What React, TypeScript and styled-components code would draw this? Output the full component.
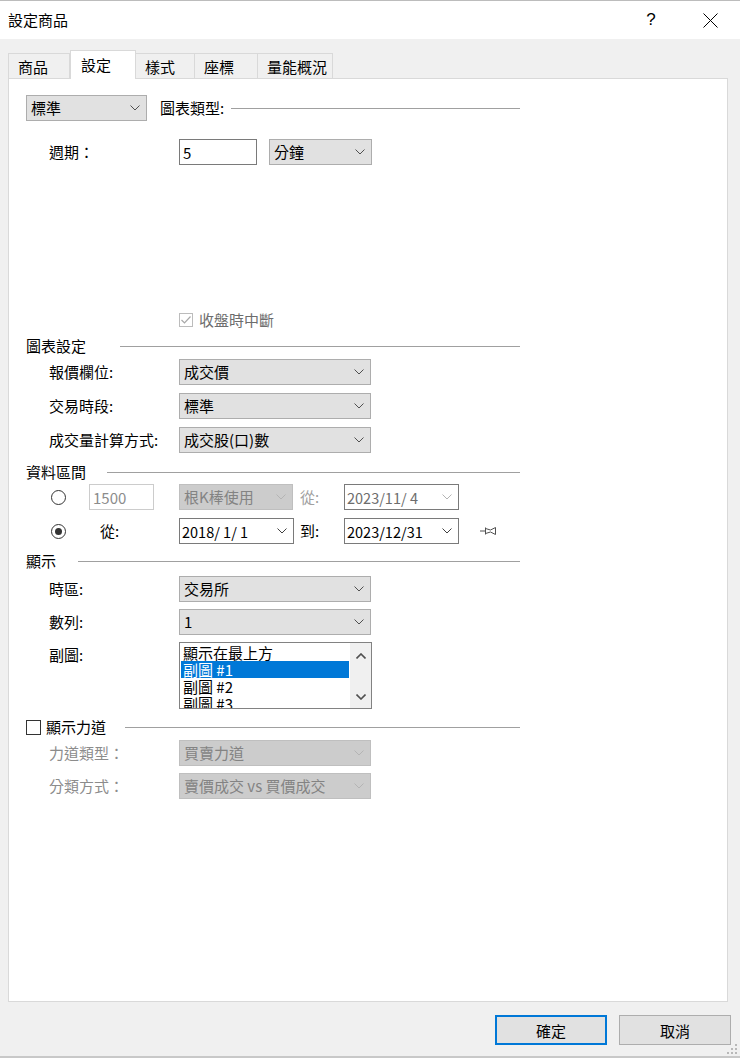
import styled, { createGlobalStyle } from "styled-components";

const GlobalStyle = createGlobalStyle`
  html, body {
    margin: 0;
    padding: 0;
    background: #f0f0f0;
  }
  body {
    font-family: "Noto Sans CJK TC", "Noto Sans", sans-serif;
    font-size: 15px;
    color: #000;
  }
`;

const TABS = [
  { label: "商品", w: 62 },
  { label: "設定", w: 66 },
  { label: "樣式", w: 59 },
  { label: "座標", w: 63 },
  { label: "量能概況", w: 75 },
];
const ACTIVE_TAB = 1;

const SUB_CHARTS = ["顯示在最上方", "副圖 #1", "副圖 #2", "副圖 #3"];

const Chevron = ({ color = "#505050" }) => (
  <svg width="10" height="6" viewBox="0 0 10 6">
    <polyline points="0.5,0.5 5,5 9.5,0.5" fill="none" stroke={color} strokeWidth="1" />
  </svg>
);

const ComboBox = ({ w, value, disabled = false }) => (
  <Combo $w={w} $disabled={disabled}>
    <span>{value}</span>
    <Chevron color={disabled ? "#b4b4b4" : "#505050"} />
  </Combo>
);

const DatePicker = ({ value, disabled = false }) => (
  <DateBox $disabled={disabled}>
    <DateText>{value}</DateText>
    <Chevron color={disabled ? "#b4b4b4" : "#404040"} />
  </DateBox>
);

const PinIcon = () => (
  <svg width="18" height="10" viewBox="0 0 18 10">
    <path
      d="M0 5H5 M5.5 1.5V8.5 M5.5 2.5L10.5 4L15.5 1.5V8.5L10.5 6L5.5 7.5"
      fill="none"
      stroke="#505050"
      strokeWidth="1"
    />
  </svg>
);

const App = () => {
  return (
    <>
      <GlobalStyle />
      <Window>
        <TitleBar>
          <Title>設定商品</Title>
          <HelpButton>?</HelpButton>
          <CloseButton>
            <svg width="15" height="15" viewBox="0 0 15 15">
              <path d="M0.5 0.5L14.5 14.5M14.5 0.5L0.5 14.5" stroke="#000" strokeWidth="1" />
            </svg>
          </CloseButton>
        </TitleBar>

        <TabStrip>
          {TABS.map((t, i) => (
            <Tab key={t.label} $w={t.w} $active={i === ACTIVE_TAB}>
              {t.label}
            </Tab>
          ))}
        </TabStrip>

        <Panel>
          <Content>
            <Row>
              <ComboBox w={121} value="標準" />
              <HeaderLabel $ml={13}>圖表類型:</HeaderLabel>
              <Rule $gap={7} />
            </Row>

            <Row $mt={18} $indent={23}>
              <FieldLabel $w={130}>週期：</FieldLabel>
              <TextBox $w={78}>5</TextBox>
              <Spacer $w={12} />
              <ComboBox w={103} value="分鐘" />
            </Row>

            <CheckRow $mt={145} $indent={153}>
              <CheckBox $disabled>
                <svg width="12" height="12" viewBox="0 0 12 12">
                  <polyline points="1.5,6 4.5,9 10.5,2.5" fill="none" stroke="#a8a8a8" strokeWidth="1.2" />
                </svg>
              </CheckBox>
              <MutedText $dark>收盤時中斷</MutedText>
            </CheckRow>

            <Header $mt={6}>
              <HeaderLabel>圖表設定</HeaderLabel>
              <Rule $gap={34} />
            </Header>
            <RowStack $mt={3} $gap={8}>
              <Row $indent={23}>
                <FieldLabel $w={130}>報價欄位:</FieldLabel>
                <ComboBox w={192} value="成交價" />
              </Row>
              <Row $indent={23}>
                <FieldLabel $w={130}>交易時段:</FieldLabel>
                <ComboBox w={192} value="標準" />
              </Row>
              <Row $indent={23}>
                <FieldLabel $w={130}>成交量計算方式:</FieldLabel>
                <ComboBox w={192} value="成交股(口)數" />
              </Row>
            </RowStack>

            <Header $mt={9}>
              <HeaderLabel>資料區間</HeaderLabel>
              <Rule $gap={21} />
            </Header>
            <RowStack $mt={2} $gap={8}>
              <RangeRow>
                <RadioCell>
                  <Radio />
                </RadioCell>
                <TextBox $w={65} $disabled>
                  1500
                </TextBox>
                <ComboBox w={114} value="根K棒使用" disabled />
                <RangeLabel $muted>從:</RangeLabel>
                <DatePicker value="2023/11/ 4" disabled />
                <span />
              </RangeRow>
              <RangeRow>
                <RadioCell>
                  <Radio $checked />
                </RadioCell>
                <RangeLabel $indent={11}>從:</RangeLabel>
                <DatePicker value="2018/ 1/ 1" />
                <RangeLabel>到:</RangeLabel>
                <DatePicker value="2023/12/31" />
                <PinCell>
                  <PinIcon />
                </PinCell>
              </RangeRow>
            </RowStack>

            <Header $mt={7}>
              <HeaderLabel>顯示</HeaderLabel>
              <Rule $gap={22} />
            </Header>
            <RowStack $mt={5} $gap={7}>
              <Row $indent={23}>
                <FieldLabel $w={130}>時區:</FieldLabel>
                <ComboBox w={192} value="交易所" />
              </Row>
              <Row $indent={23}>
                <FieldLabel $w={130}>數列:</FieldLabel>
                <ComboBox w={192} value="1" />
              </Row>
              <ListRow $indent={23}>
                <FieldLabel $w={130}>副圖:</FieldLabel>
                <ListBox>
                  <ListItems>
                    {SUB_CHARTS.map((s, i) => (
                      <ListItem key={s} $selected={i === 1}>
                        {s}
                      </ListItem>
                    ))}
                  </ListItems>
                  <ScrollBar>
                    <svg width="10" height="6" viewBox="0 0 10 6">
                      <polyline points="0.5,5.5 5,1 9.5,5.5" fill="none" stroke="#505050" strokeWidth="1.6" />
                    </svg>
                    <svg width="10" height="6" viewBox="0 0 10 6">
                      <polyline points="0.5,0.5 5,5 9.5,0.5" fill="none" stroke="#505050" strokeWidth="1.6" />
                    </svg>
                  </ScrollBar>
                </ListBox>
              </ListRow>
            </RowStack>

            <Header $mt={8}>
              <CheckBox $large />
              <HeaderLabel $ml={5}>顯示力道</HeaderLabel>
              <Rule $gap={19} />
            </Header>
            <RowStack $mt={3} $gap={7}>
              <Row $indent={23}>
                <FieldLabel $w={130} $muted>
                  力道類型：
                </FieldLabel>
                <ComboBox w={192} value="買賣力道" disabled />
              </Row>
              <Row $indent={23}>
                <FieldLabel $w={130} $muted>
                  分類方式：
                </FieldLabel>
                <ComboBox w={192} value="賣價成交 vs 買價成交" disabled />
              </Row>
            </RowStack>
          </Content>
        </Panel>

        <Footer>
          <DialogButton $primary>確定</DialogButton>
          <DialogButton>取消</DialogButton>
        </Footer>

        <Grip>
          <svg width="12" height="12" viewBox="0 0 12 12">
            {[
              [10, 2],
              [10, 6],
              [6, 6],
              [10, 10],
              [6, 10],
              [2, 10],
            ].map(([x, y]) => (
              <rect key={`${x}-${y}`} x={x - 1} y={y - 1} width="2" height="2" fill="#b8b8b8" />
            ))}
          </svg>
        </Grip>
      </Window>
    </>
  );
};

export default App;

const Window = styled.div`
  position: relative;
  width: 740px;
  height: 1058px;
  box-sizing: border-box;
  border-top: 1px solid #bcbcbc;
  border-bottom: 2px solid #c8c8c8;
  background: #f0f0f0;
  display: flex;
  flex-direction: column;
`;

const TitleBar = styled.div`
  height: 38px;
  flex-shrink: 0;
  background: #fff;
  display: flex;
  align-items: center;
  padding-left: 8px;
  padding-right: 7px;
`;

const Title = styled.div`
  font-size: 15px;
  line-height: 20px;
`;

const HelpButton = styled.div`
  margin-left: auto;
  width: 46px;
  text-align: center;
  font-family: "Liberation Sans", sans-serif;
  font-size: 17px;
  line-height: 20px;
`;

const CloseButton = styled.div`
  width: 46px;
  margin-left: 13px;
  display: flex;
  justify-content: center;
  align-items: center;
`;

const TabStrip = styled.div`
  margin-top: 11px;
  height: 29px;
  margin-bottom: -1px;
  padding-left: 8px;
  display: flex;
  align-items: flex-end;
  position: relative;
  z-index: 1;
`;

const Tab = styled.div<{ $w: number; $active?: boolean }>`
  width: ${(p) => p.$w}px;
  height: ${(p) => (p.$active ? 29 : 26)}px;
  flex-shrink: 0;
  box-sizing: border-box;
  border: 1px solid #d9d9d9;
  border-left: ${(p) => (p.$active ? "1px solid #d9d9d9" : "none")};
  border-bottom: ${(p) => (p.$active ? "none" : "1px solid #d9d9d9")};
  background: ${(p) => (p.$active ? "#fff" : "#f0f0f0")};
  display: flex;
  align-items: center;
  padding-left: ${(p) => (p.$active ? 10 : 9)}px;
  padding-bottom: ${(p) => (p.$active ? 2 : 0)}px;
  font-size: 15px;

  &:first-child {
    border-left: 1px solid #d9d9d9;
  }
`;

const Panel = styled.div`
  margin-left: 8px;
  width: 720px;
  height: 924px;
  flex-shrink: 0;
  box-sizing: border-box;
  border: 1px solid #d9d9d9;
  background: #fff;
  padding: 16px 0 0 17px;
`;

const Content = styled.div`
  width: 494px;
  display: flex;
  flex-direction: column;
`;

const Row = styled.div<{ $mt?: number; $indent?: number }>`
  display: flex;
  align-items: center;
  height: 26px;
  margin-top: ${(p) => p.$mt ?? 0}px;
  padding-left: ${(p) => p.$indent ?? 0}px;
`;

const CheckRow = styled(Row)`
  height: 20px;
`;

const ListRow = styled(Row)`
  height: 67px;
  align-items: flex-start;

  & > span {
    margin-top: 3px;
  }
`;

const RowStack = styled.div<{ $mt: number; $gap: number }>`
  display: flex;
  flex-direction: column;
  gap: ${(p) => p.$gap}px;
  margin-top: ${(p) => p.$mt}px;
`;

const Header = styled.div<{ $mt: number }>`
  display: flex;
  align-items: center;
  height: 20px;
  margin-top: ${(p) => p.$mt}px;
`;

const HeaderLabel = styled.span<{ $ml?: number }>`
  margin-left: ${(p) => p.$ml ?? 0}px;
  font-size: 15px;
  line-height: 20px;
  white-space: nowrap;
`;

const Rule = styled.div<{ $gap: number }>`
  flex: 1;
  height: 1px;
  background: #a0a0a0;
  margin-left: ${(p) => p.$gap}px;
`;

const FieldLabel = styled.span<{ $w: number; $muted?: boolean }>`
  width: ${(p) => p.$w}px;
  flex-shrink: 0;
  font-size: 15px;
  line-height: 20px;
  color: ${(p) => (p.$muted ? "#8c8c8c" : "#000")};
  white-space: nowrap;
`;

const MutedText = styled.span<{ $dark?: boolean }>`
  margin-left: 6px;
  font-size: 15px;
  line-height: 20px;
  color: ${(p) => (p.$dark ? "#6d6d6d" : "#8c8c8c")};
`;

const Spacer = styled.span<{ $w: number }>`
  width: ${(p) => p.$w}px;
  flex-shrink: 0;
`;

const Combo = styled.div<{ $w: number; $disabled?: boolean }>`
  width: ${(p) => p.$w}px;
  height: 26px;
  flex-shrink: 0;
  box-sizing: border-box;
  border: 1px solid ${(p) => (p.$disabled ? "#bfbfbf" : "#adadad")};
  background: ${(p) => (p.$disabled ? "#cccccc" : "#e1e1e1")};
  color: ${(p) => (p.$disabled ? "#838383" : "#000")};
  display: flex;
  align-items: center;
  justify-content: space-between;
  padding: 0 6px 0 4px;
  font-size: 15px;
  line-height: 20px;
  white-space: nowrap;
  overflow: hidden;
`;

const TextBox = styled.div<{ $w: number; $disabled?: boolean }>`
  width: ${(p) => p.$w}px;
  height: 26px;
  flex-shrink: 0;
  box-sizing: border-box;
  border: 1px solid ${(p) => (p.$disabled ? "#cccccc" : "#7a7a7a")};
  background: #fff;
  color: ${(p) => (p.$disabled ? "#8c8c8c" : "#000")};
  display: flex;
  align-items: center;
  padding: 0 3px;
  font-size: 15px;
`;

const DateBox = styled.div<{ $disabled?: boolean }>`
  width: 115px;
  height: 26px;
  box-sizing: border-box;
  border: 1px solid #7a7a7a;
  background: #fff;
  color: ${(p) => (p.$disabled ? "#6d6d6d" : "#000")};
  display: flex;
  align-items: center;
  justify-content: space-between;
  padding: 0 6px 0 2px;
`;

const DateText = styled.span`
  font-size: 14.5px;
  white-space: pre;
`;

const RangeRow = styled.div`
  display: grid;
  grid-template-columns: 63px 90px 115px 50px 115px auto;
  align-items: center;
  height: 26px;

  & > ${Combo} {
    width: 114px;
  }
`;

const RadioCell = styled.div`
  padding-left: 25px;
  display: flex;
  align-items: center;
`;

const Radio = styled.span<{ $checked?: boolean }>`
  width: 15px;
  height: 15px;
  box-sizing: border-box;
  border: 1px solid #333;
  border-radius: 50%;
  display: flex;
  align-items: center;
  justify-content: center;

  &::after {
    content: "";
    width: 7px;
    height: 7px;
    border-radius: 50%;
    background: ${(p) => (p.$checked ? "#333" : "transparent")};
  }
`;

const RangeLabel = styled.span<{ $indent?: number; $muted?: boolean }>`
  padding-left: ${(p) => p.$indent ?? 6}px;
  font-size: 15px;
  line-height: 20px;
  color: ${(p) => (p.$muted ? "#a0a0a0" : "#000")};
`;

const PinCell = styled.div`
  padding-left: 21px;
  display: flex;
  align-items: center;
`;

const CheckBox = styled.span<{ $disabled?: boolean; $large?: boolean }>`
  width: ${(p) => (p.$large ? 15 : 14)}px;
  height: ${(p) => (p.$large ? 15 : 14)}px;
  flex-shrink: 0;
  box-sizing: border-box;
  border: 1px solid ${(p) => (p.$disabled ? "#bcbcbc" : "#333")};
  background: #fff;
  display: flex;
  align-items: center;
  justify-content: center;
`;

const ListBox = styled.div`
  width: 193px;
  height: 67px;
  box-sizing: border-box;
  border: 1px solid #828282;
  background: #fff;
  display: flex;
  overflow: hidden;
`;

const ListItems = styled.div`
  flex: 1;
  padding: 1px 1px 0 1px;
  overflow: hidden;
`;

const ListItem = styled.div<{ $selected?: boolean }>`
  height: 17px;
  line-height: 17px;
  padding-left: 2px;
  font-size: 15px;
  white-space: nowrap;
  background: ${(p) => (p.$selected ? "#0078d7" : "transparent")};
  color: ${(p) => (p.$selected ? "#fff" : "#000")};
`;

const ScrollBar = styled.div`
  width: 21px;
  flex-shrink: 0;
  background: #f0f0f0;
  display: flex;
  flex-direction: column;
  align-items: center;
  justify-content: space-between;
  padding: 10px 0 8px;
  box-sizing: border-box;
`;

const Footer = styled.div`
  margin-top: 13px;
  display: flex;
  justify-content: flex-end;
  gap: 12px;
  padding-right: 9px;
`;

const DialogButton = styled.div<{ $primary?: boolean }>`
  width: 112px;
  height: 30px;
  box-sizing: border-box;
  border: ${(p) => (p.$primary ? "2px solid #0078d7" : "1px solid #adadad")};
  background: #e1e1e1;
  display: flex;
  align-items: center;
  justify-content: center;
  font-size: 15px;
`;

const Grip = styled.div`
  position: absolute;
  right: 2px;
  bottom: 1px;
  display: flex;
`;
